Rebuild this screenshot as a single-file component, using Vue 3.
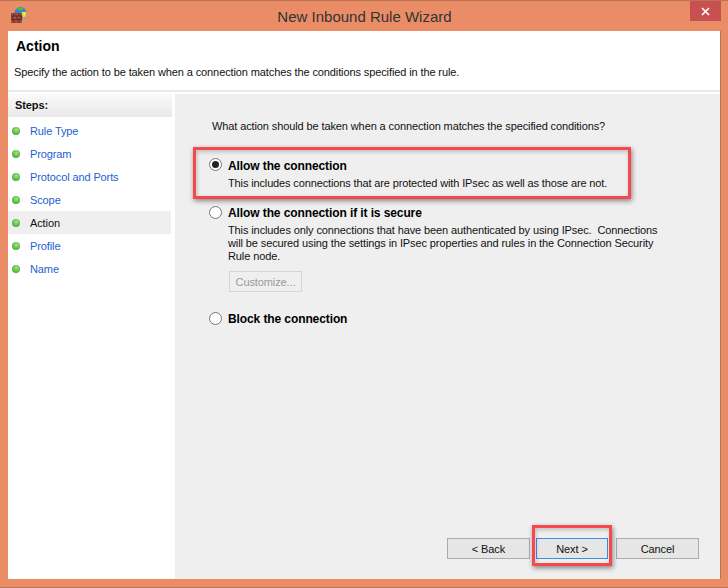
<script setup>
const steps = [
  { name: 'Rule Type' }, { name: 'Program' }, { name: 'Protocol and Ports' }, { name: 'Scope' },
  { name: 'Action', active: true }, { name: 'Profile' }, { name: 'Name' },
]
</script>

<template>
  <div class="window">
    <div class="titlebar">
      <svg class="appicon" width="16" height="16" viewBox="0 0 16 16">
        <circle cx="9.500" cy="6" r="6" fill="#2f86d8" />
        <path d="M5 2.500 Q9 -1 13 1 Q11 4 8 3.500Z" fill="#4fb84a" />
        <path d="M10.500 5 Q15 4 15.500 6 Q15 10 12 11Z" fill="#e6e23c" />
        <rect x="0" y="6" width="11" height="10" fill="#a04e3c" />
        <path d="M0 9h11M0 12.500h11M3 6v3M8 6v3M1.500 9v3.500M6 9v3.500M10 9v3.500M3 12.500v3.500M8 12.500v3.500" stroke="#63291f" stroke-width="1" fill="none" />
      </svg>
      <span class="title">New Inbound Rule Wizard</span>
      <div class="close">
        <svg width="9" height="9" viewBox="0 0 9 9"><path d="M1 1l7 7M8 1l-7 7" stroke="#fff" stroke-width="1.700" /></svg>
      </div>
    </div>
    <div class="client">
      <header class="head">
        <h1>Action</h1>
        <p>Specify the action to be taken when a connection matches the conditions specified in the rule.</p>
      </header>
      <div class="body">
        <aside class="side">
          <div class="steps-head">Steps:</div>
          <ul class="steps">
            <li v-for="s in steps" :key="s.name" :class="{ active: s.active }">
              <i class="dot"></i><span>{{ s.name }}</span>
            </li>
          </ul>
        </aside>
        <main class="panel">
          <div class="content">
            <p class="question">What action should be taken when a connection matches the specified conditions?</p>
            <div class="opt first">
              <span class="radio on"></span>
              <div>
                <div class="lbl">Allow the connection</div>
                <div class="desc first-desc">This includes connections that are protected with IPsec as well as those are not.</div>
              </div>
            </div>
            <div class="opt second">
              <span class="radio"></span>
              <div>
                <div class="lbl">Allow the connection if it is secure</div>
                <div class="desc tight">This includes only connections that have been authenticated by using IPsec.&nbsp; Connections<br />will be secured using the settings in IPsec properties and rules in the Connection Security<br />Rule node.</div>
                <button class="btn custom" disabled>Customize...</button>
              </div>
            </div>
            <div class="opt third">
              <span class="radio"></span>
              <div class="lbl">Block the connection</div>
            </div>
          </div>
          <div class="buttons">
            <button class="btn nav">&lt; Back</button>
            <button class="btn nav next">Next &gt;</button>
            <button class="btn nav cancel">Cancel</button>
          </div>
        </main>
      </div>
    </div>
    <div class="mark mark-a"></div>
    <div class="mark mark-b"></div>
  </div>
</template>

<style>
html, body { margin: 0; padding: 0; }
</style>

<style scoped>
.window {
  position: relative; width: 728px; height: 588px; box-sizing: border-box;
  display: flex; flex-direction: column;
  padding: 0 7px 8px 8px; background: #ea8d67;
  border-top: 1px solid #b87455; border-bottom: 1px solid #b87455;
  font-family: "Liberation Sans", Arial, sans-serif; font-size: 11px; letter-spacing: -0.11px; color: #111;
  overflow: hidden;
}
.titlebar { position: relative; height: 30px; flex: none; display: flex; align-items: center; justify-content: center; }
.title { font-size: 15px; letter-spacing: 0; color: #333; margin: 1px 0 0 0; }
.appicon { position: absolute; left: 3px; top: 6px; }
.close {
  position: absolute; right: 0; top: 0; width: 31px; height: 20px;
  background: #c75050; display: flex; align-items: center; justify-content: center;
}
.client { flex: 1; min-height: 0; display: flex; flex-direction: column; background: #fff; border-right: 1px solid #b87455; }
.head { height: 61px; flex: none; border-bottom: 2px solid #e9e9e9; box-sizing: border-box; padding: 7px 6px 0; }
.head h1 { margin: 0 0 0 2px; font-size: 14px; letter-spacing: 0; line-height: 17px; font-weight: 700; color: #000; }
.head p { margin: 10px 0 0; line-height: 14px; }
.body { flex: 1; min-height: 0; display: flex; padding-top: 2px; }
.side { width: 164px; flex: none; }
.steps-head {
  height: 23px; line-height: 23px; padding-left: 7px; font-weight: 700; color: #111;
  background: linear-gradient(#fafafa, #e9e9e9);
}
.steps { list-style: none; margin: 2px 0 0; padding: 0; }
.steps li { height: 23px; width: 163px; display: flex; align-items: center; color: #1d5fd0; }
.steps li.active { background: #efefef; color: #111; }
.dot {
  width: 8px; height: 8px; border-radius: 50%; margin: 0 10px 0 4px; flex: none;
  background: radial-gradient(circle at 55% 35%, #a5e488, #4fb53a 65%, #3d9a2c);
}
.panel {
  flex: 1; min-width: 0; margin-left: 3px; background: #efefef;
  display: flex; flex-direction: column; justify-content: space-between;
}
.content { padding: 24px 0 0 37px; width: 470px; }
.question { margin: 0; line-height: 14px; white-space: nowrap; position: relative; top: 1px; }
.opt { display: flex; gap: 6px; margin-left: -3px; }
.first { margin-top: 26px; }
.second { margin-top: 16px; }
.third { margin-top: 20px; }
.radio {
  width: 13px; height: 13px; border-radius: 50%; border: 1px solid #777; background: #fff;
  box-sizing: border-box; flex: none; display: flex; align-items: center; justify-content: center;
}
.radio.on::after { content: ""; width: 7px; height: 7px; border-radius: 50%; background: #222; }
.lbl { font-size: 12px; letter-spacing: -0.1px; font-weight: 700; line-height: 14px; color: #000; white-space: nowrap; }
.first .lbl { line-height: 16px; margin-bottom: -2px; }
.desc { margin-top: 5px; line-height: 13px; white-space: nowrap; }
.first-desc { letter-spacing: -0.135px; }
.desc.tight { margin-top: 4px; }
.btn {
  font: inherit; letter-spacing: inherit; color: #111; background: #e6e6e6; border: 1px solid #acacac; box-sizing: border-box; padding: 0;
}
.custom { display: block; width: 73px; height: 21px; margin: 8px 0 0 1px; color: #9a9a9a; background: #efefef; border-color: #d5d5d5; }
.buttons { display: flex; padding: 0 0 20px 272px; }
.nav { width: 83px; height: 21px; }
.next { width: 72px; margin-left: 6px; border: 1.500px solid #3a8fe8; }
.cancel { margin-left: 8px; }
.mark { position: absolute; border: 3px solid #f7484e; box-shadow: 1px 2px 5px rgba(0,0,0,.45), inset 1px 2px 4px rgba(0,0,0,.2); box-sizing: border-box; }
.mark-a { left: 193px; top: 146px; width: 438px; height: 52px; }
.mark-b { left: 532px; top: 524px; width: 80px; height: 41px; }
</style>
